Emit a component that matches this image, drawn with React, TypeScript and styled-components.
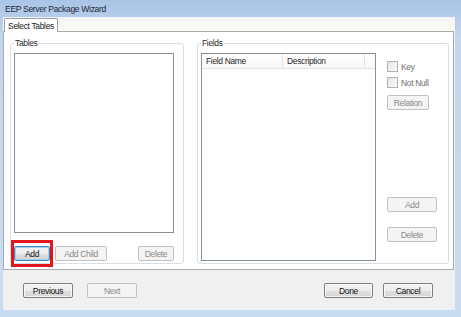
import React from "react";
import styled, { createGlobalStyle } from "styled-components";

const GlobalStyle = createGlobalStyle`
  html, body {
    margin: 0;
    padding: 0;
    background: #c3d7ee;
  }
  body {
    font-family: "Liberation Sans", Arial, sans-serif;
    font-size: 8.5px;
    letter-spacing: -0.35px;
    color: #1a1a1a;
  }
`;

const Window = styled.div`
  width: 461px;
  height: 317px;
  display: flex;
  flex-direction: column;
  background: linear-gradient(#a9c4e6 0%, #c2d7ef 12%, #c8dcf1 100%);
  overflow: hidden;
`;

const TitleBar = styled.div`
  height: 17px;
  flex: none;
  display: flex;
  align-items: center;
  padding-left: 5px;
  font-size: 8.6px;
  color: #1e2a3a;
`;

const Client = styled.div`
  flex: 1;
  margin: 0 6px 7px 3px;
  background: #f0f0f0;
  display: flex;
  flex-direction: column;
`;

const TabStrip = styled.div`
  height: 14px;
  flex: none;
  display: flex;
  align-items: flex-end;
  padding-left: 1px;
  background: linear-gradient(#f4f4f4, #fbfaf2);
`;

const Tab = styled.div`
  width: 54px;
  height: 14px;
  box-sizing: border-box;
  border: 1px solid #9aa0a8;
  border-bottom: none;
  border-radius: 2px 2px 0 0;
  background: #ffffff;
  margin-bottom: -1px;
  position: relative;
  z-index: 1;
  display: flex;
  align-items: center;
  justify-content: center;
`;

const TabPage = styled.div`
  height: 239px;
  box-sizing: border-box;
  margin-right: 1px;
  border: 1px solid #a7abb0;
  background: #ffffff;
  display: flex;
  gap: 13px;
  padding: 11px 4px 5px 6px;
`;

const Group = styled.div<{ $width?: number }>`
  position: relative;
  box-sizing: border-box;
  ${(p) => (p.$width ? `width: ${p.$width}px;` : "flex: 1;")}
  border: 1px solid #d5dfe5;
  border-radius: 3px;
  display: flex;
  padding: 9px 0 2px 3px;
`;

const GroupLabel = styled.span`
  position: absolute;
  top: -6px;
  left: 3px;
  padding: 0 1px;
  background: #ffffff;
  color: #2a2a2a;
`;

const TablesColumn = styled.div`
  display: flex;
  flex-direction: column;
  width: 160px;
`;

const ListBox = styled.div`
  height: 180px;
  box-sizing: border-box;
  border: 1px solid #8a8e96;
  background: #ffffff;
`;

const ButtonRow = styled.div`
  display: flex;
  gap: 5px;
  margin-top: 13px;
`;

const Button = styled.button<{ $width: number; $disabled?: boolean; $focused?: boolean }>`
  width: ${(p) => p.$width}px;
  height: 15px;
  box-sizing: border-box;
  padding: 0;
  font-family: inherit;
  font-size: 8.5px;
  letter-spacing: -0.35px;
  border-radius: 2px;
  border: 1px solid
    ${(p) => (p.$disabled ? "#c0c3c6" : p.$focused ? "#4a86b8" : "#7d7d7d")};
  color: ${(p) => (p.$disabled ? "#8b8b8b" : "#111111")};
  background: ${(p) =>
    p.$disabled
      ? "#f4f4f4"
      : "linear-gradient(#f3f3f3 0%, #ececec 50%, #e0e0e0 51%, #d6d6d6 100%)"};
  box-shadow: ${(p) =>
    p.$disabled
      ? "none"
      : p.$focused
      ? "inset 0 0 0 1px #9ad2f2"
      : "inset 0 0 0 1px rgba(255,255,255,0.7)"};
  flex: none;
`;

const PushRight = styled.div`
  margin-left: auto;
`;

const Highlight = styled.span`
  position: relative;
  display: inline-flex;
  &::after {
    content: "";
    position: absolute;
    top: -6px;
    left: -3px;
    right: -3px;
    bottom: -6px;
    border: 3px solid #e3141c;
    box-sizing: border-box;
    pointer-events: none;
  }
`;

const ListView = styled.div`
  width: 175px;
  box-sizing: border-box;
  border: 1px solid #8a8e96;
  background: #ffffff;
  display: flex;
  flex-direction: column;
`;

const HeaderRow = styled.div`
  height: 14px;
  display: flex;
  border-bottom: 1px solid #e2e3e5;
  background: linear-gradient(#ffffff, #f7f8f9);
`;

const HeaderCell = styled.div<{ $width: number }>`
  width: ${(p) => p.$width}px;
  box-sizing: border-box;
  padding-left: 4px;
  display: flex;
  align-items: center;
  border-right: 1px solid #e5e5e5;
  color: #2a2a2a;
`;

const SideColumn = styled.div`
  display: flex;
  flex-direction: column;
  margin-left: 11px;
  width: 50px;
  padding-top: 8px;
  padding-bottom: 19px;
`;

const CheckRow = styled.label`
  display: flex;
  align-items: center;
  gap: 3px;
  height: 11px;
  margin-bottom: 5px;
  color: #6e6e6e;
`;

const CheckBox = styled.span`
  width: 11px;
  height: 11px;
  box-sizing: border-box;
  border: 1px solid #b1b1b1;
  background: linear-gradient(135deg, #e6e6e6, #fafafa);
  flex: none;
`;

const Spacer = styled.div<{ $height?: number }>`
  ${(p) => (p.$height ? `height: ${p.$height}px; flex: none;` : "flex: 1;")}
`;

const Footer = styled.div`
  flex: 1;
  display: flex;
  align-items: flex-start;
  padding: 13px 22px 0 20px;
  gap: 14px;
`;

const FooterRight = styled.div`
  margin-left: auto;
  display: flex;
  gap: 10px;
`;

const RelationWrap = styled.div`
  margin-top: 2px;
`;

export default function App() {
  return (
    <>
      <GlobalStyle />
      <Window>
        <TitleBar>EEP Server Package Wizard</TitleBar>
        <Client>
          <TabStrip>
            <Tab>Select Tables</Tab>
          </TabStrip>
          <TabPage>
            <Group $width={174}>
              <GroupLabel>Tables</GroupLabel>
              <TablesColumn>
                <ListBox />
                <ButtonRow>
                  <Highlight>
                    <Button $width={36} $focused>
                      Add
                    </Button>
                  </Highlight>
                  <Button $width={52} $disabled>
                    Add Child
                  </Button>
                  <PushRight>
                    <Button $width={36} $disabled>
                      Delete
                    </Button>
                  </PushRight>
                </ButtonRow>
              </TablesColumn>
            </Group>
            <Group>
              <GroupLabel>Fields</GroupLabel>
              <ListView>
                <HeaderRow>
                  <HeaderCell $width={81}>Field Name</HeaderCell>
                  <HeaderCell $width={82}>Description</HeaderCell>
                </HeaderRow>
              </ListView>
              <SideColumn>
                <CheckRow>
                  <CheckBox />
                  Key
                </CheckRow>
                <CheckRow>
                  <CheckBox />
                  Not Null
                </CheckRow>
                <RelationWrap>
                  <Button $width={42} $disabled>
                    Relation
                  </Button>
                </RelationWrap>
                <Spacer />
                <Button $width={50} $disabled>
                  Add
                </Button>
                <Spacer $height={15} />
                <Button $width={50} $disabled>
                  Delete
                </Button>
              </SideColumn>
            </Group>
          </TabPage>
          <Footer>
            <Button $width={50}>Previous</Button>
            <Button $width={50} $disabled>
              Next
            </Button>
            <FooterRight>
              <Button $width={49}>Done</Button>
              <Button $width={50}>Cancel</Button>
            </FooterRight>
          </Footer>
        </Client>
      </Window>
    </>
  );
}
